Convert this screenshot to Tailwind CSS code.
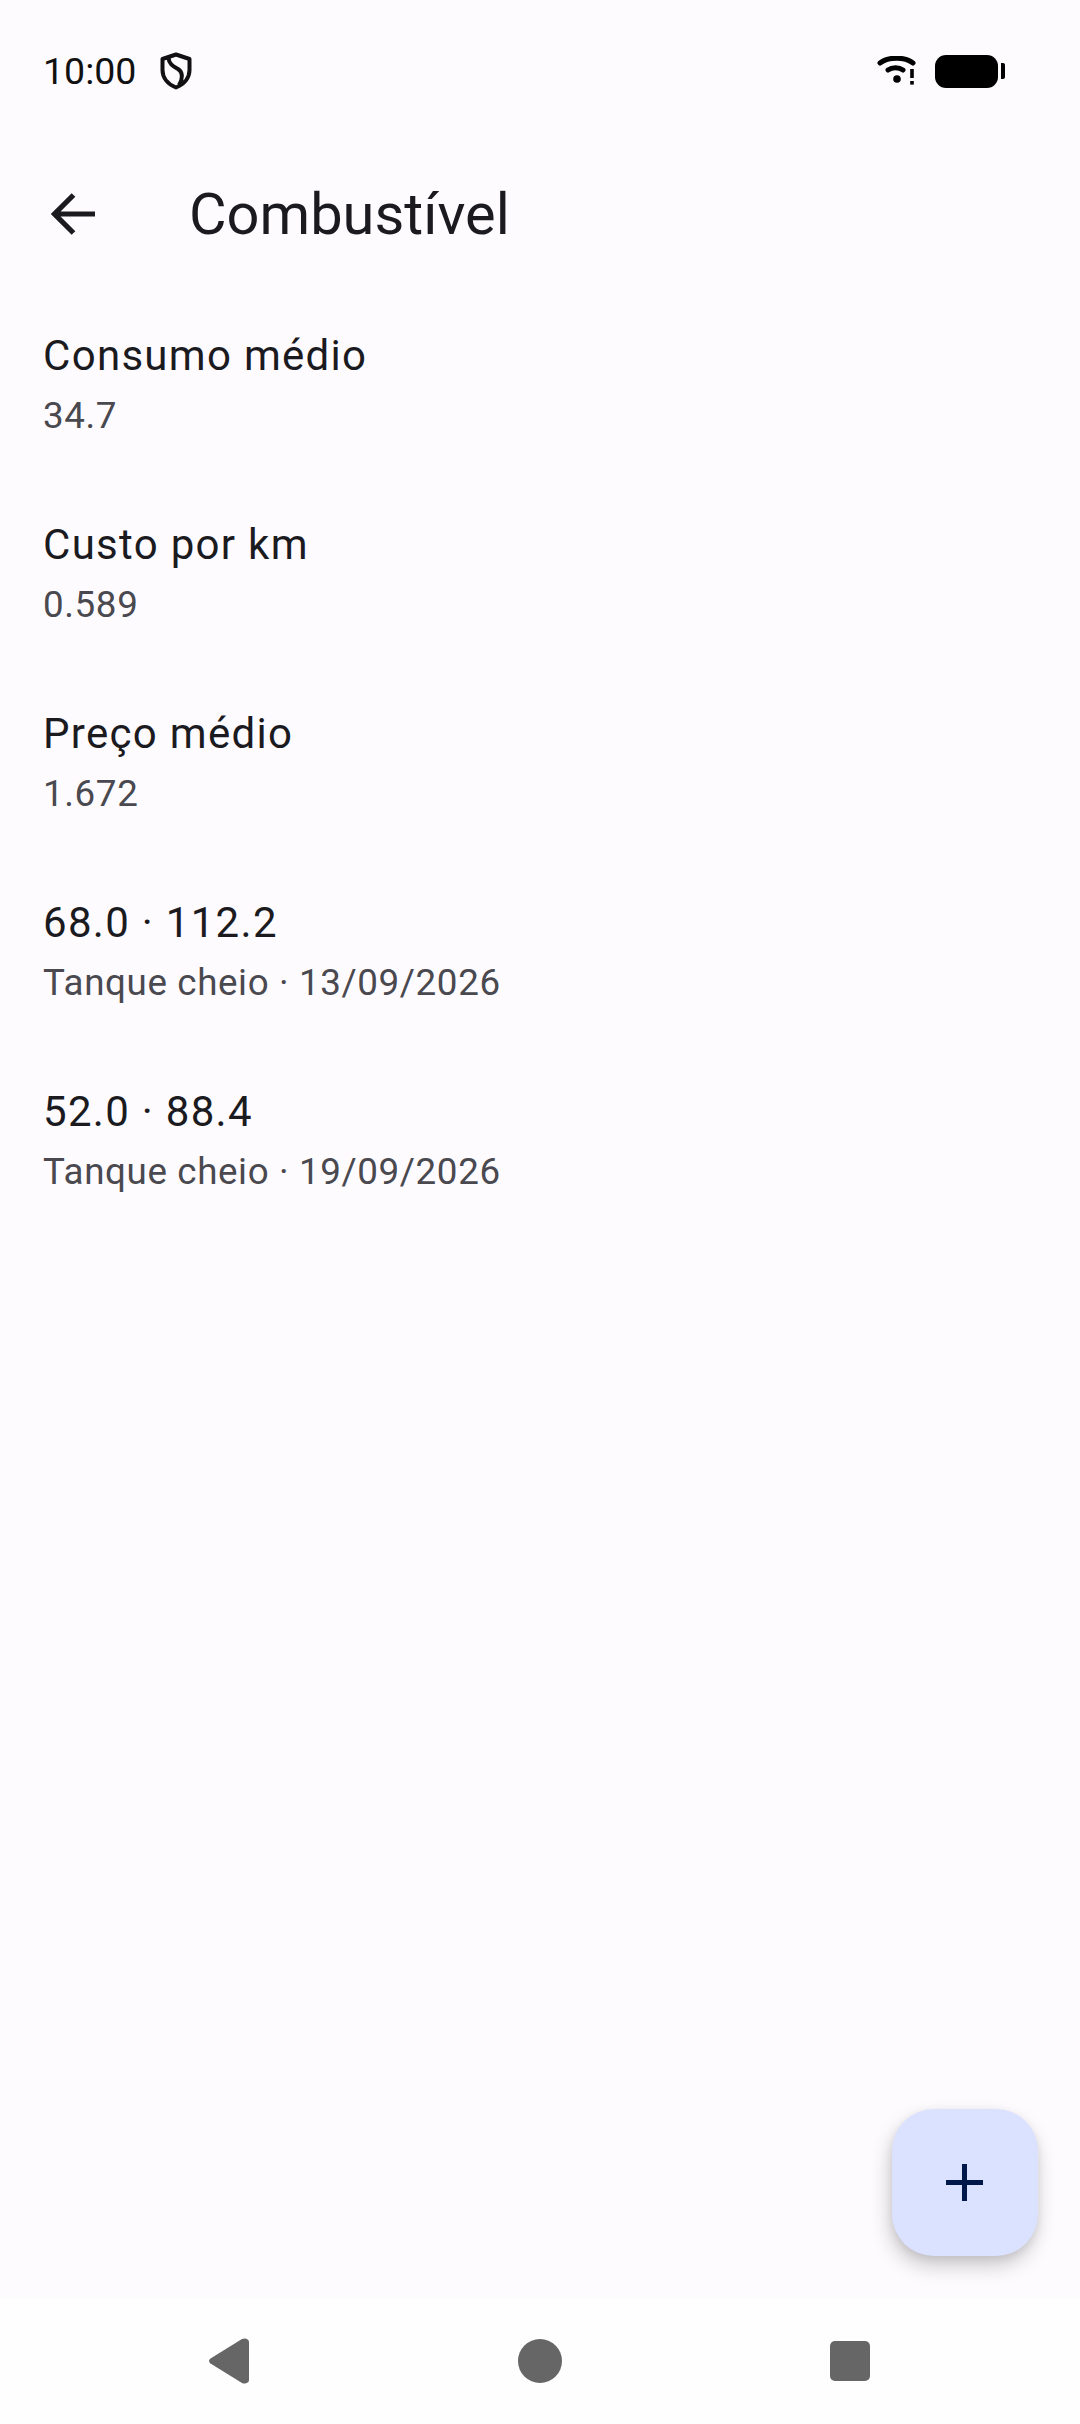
<!DOCTYPE html>
<html lang="en">
<head>
    <meta charset="UTF-8">
    <meta name="viewport" content="width=device-width, initial-scale=1.0">
    <title>Combustível</title>
    <script src="https://cdn.jsdelivr.net/npm/@tailwindcss/browser@4"></script>
</head>
<body class="bg-[#fefbff] font-['Roboto',sans-serif] text-[#1b1b1f]">
<div class="relative flex flex-col h-[2424px] w-[1080px] overflow-hidden">

    <!-- status bar -->
    <div class="flex items-center justify-between h-[72px] mt-[35px] pl-[43px] pr-[75px] shrink-0">
        <div class="flex items-center gap-[24px]">
            <span class="text-[37.5px] leading-[42px] text-[#111]">10:00</span>
            <svg class="w-[32px] h-[38px]" viewBox="0 0 32 38" fill="none" stroke="#111" stroke-width="4">
                <path d="M16 2.5 L29.5 7 V18 C29.5 26 24 32.5 16 35.5 C8 32.5 2.5 26 2.5 18 V7 Z" stroke-linejoin="round"/>
                <path d="M8.5 6 C9 12 13 14 18 17 C23 20 23 27 19 33"/>
            </svg>
        </div>
        <div class="flex items-center gap-[19px]">
            <svg class="w-[40px] h-[30px]" viewBox="0 0 40 30" fill="none" stroke="#000" stroke-linecap="round">
                <path d="M4 7 C12 0.5 29 0.5 37 7" stroke-width="5"/>
                <path d="M12 14 C16 11 23 11 27 14" stroke-width="5"/>
                <circle cx="21" cy="23" r="3.8" fill="#000" stroke="none"/>
                <path d="M36 13 V22" stroke-width="3.6" stroke-linecap="butt"/>
                <rect x="34.2" y="25" width="3.6" height="3.6" fill="#000" stroke="none"/>
            </svg>
            <div class="flex items-center gap-[3px]">
                <div class="w-[63px] h-[33px] bg-black rounded-[11px]"></div>
                <div class="w-[4px] h-[16px] bg-black rounded-r-[2px]"></div>
            </div>
        </div>
    </div>

    <!-- app bar -->
    <div class="flex items-center h-[146px] mt-[34px] shrink-0 px-[11px]">
        <button class="w-[126px] h-[126px] flex items-center pl-[40px]">
            <svg class="w-[44px] h-[44px]" viewBox="0 0 44 44" fill="none" stroke="#1b1b1f" stroke-width="5.2">
                <path d="M44 22 H3.5 M22.5 3 L3.5 22 L22.5 41"/>
            </svg>
        </button>
        <h1 class="ml-[52px] text-[57.75px] leading-[72px] font-normal">Combustível</h1>
    </div>

    <!-- list -->
    <div class="flex flex-col mt-[2px]">
        <div class="h-[189px] pl-[43px] flex flex-col justify-center">
            <p class="text-[42px] leading-[63px] tracking-[1.3px]">Consumo médio</p>
            <p class="mt-[3px] text-[36.75px] leading-[52.5px] tracking-[0.62px] text-[#49494f]">34.7</p>
        </div>
        <div class="h-[189px] pl-[43px] flex flex-col justify-center">
            <p class="text-[42px] leading-[63px] tracking-[1.3px]">Custo por km</p>
            <p class="mt-[3px] text-[36.75px] leading-[52.5px] tracking-[0.62px] text-[#49494f]">0.589</p>
        </div>
        <div class="h-[189px] pl-[43px] flex flex-col justify-center">
            <p class="text-[42px] leading-[63px] tracking-[1.3px]">Preço médio</p>
            <p class="mt-[3px] text-[36.75px] leading-[52.5px] tracking-[0.62px] text-[#49494f]">1.672</p>
        </div>
        <div class="h-[189px] pl-[43px] flex flex-col justify-center">
            <p class="text-[42px] leading-[63px] tracking-[1.3px]">68.0 · 112.2</p>
            <p class="mt-[3px] text-[36.75px] leading-[52.5px] tracking-[0.62px] text-[#49494f]">Tanque cheio · 13/09/2026</p>
        </div>
        <div class="h-[189px] pl-[43px] flex flex-col justify-center">
            <p class="text-[42px] leading-[63px] tracking-[1.3px]">52.0 · 88.4</p>
            <p class="mt-[3px] text-[36.75px] leading-[52.5px] tracking-[0.62px] text-[#49494f]">Tanque cheio · 19/09/2026</p>
        </div>
    </div>

    <!-- fab -->
    <button class="absolute right-[42px] bottom-[168px] w-[146px] h-[147px] pr-[1px] rounded-[42px] bg-[#dae2ff] flex items-center justify-center shadow-[-2px_10px_20px_rgba(0,0,0,0.2),0_3px_8px_rgba(0,0,0,0.08)]">
        <svg class="w-[37px] h-[37px]" viewBox="0 0 37 37" fill="#001849">
            <path d="M16 0 H21 V16 H37 V21 H21 V37 H16 V21 H0 V16 H16 Z"/>
        </svg>
    </button>

    <!-- nav bar -->
    <div class="mt-auto h-[126px] shrink-0 bg-[#fefefe] flex items-center justify-center">
        <div class="flex items-center justify-between w-[661px] -ml-[1px]">
            <svg class="w-[40px] h-[46px]" viewBox="0 0 40 46" fill="#666">
                <path d="M1.5 20.5 L33 1 C36 -0.5 40 1 40 4 V42 C40 45 36 46.5 33 45 L1.5 25.5 C-0.5 24 -0.5 22 1.5 20.5 Z"/>
            </svg>
            <div class="w-[44px] h-[44px] rounded-full bg-[#666]"></div>
            <div class="w-[40px] h-[40px] rounded-[5px] bg-[#666]"></div>
        </div>
    </div>
</div>
</body>
</html>
